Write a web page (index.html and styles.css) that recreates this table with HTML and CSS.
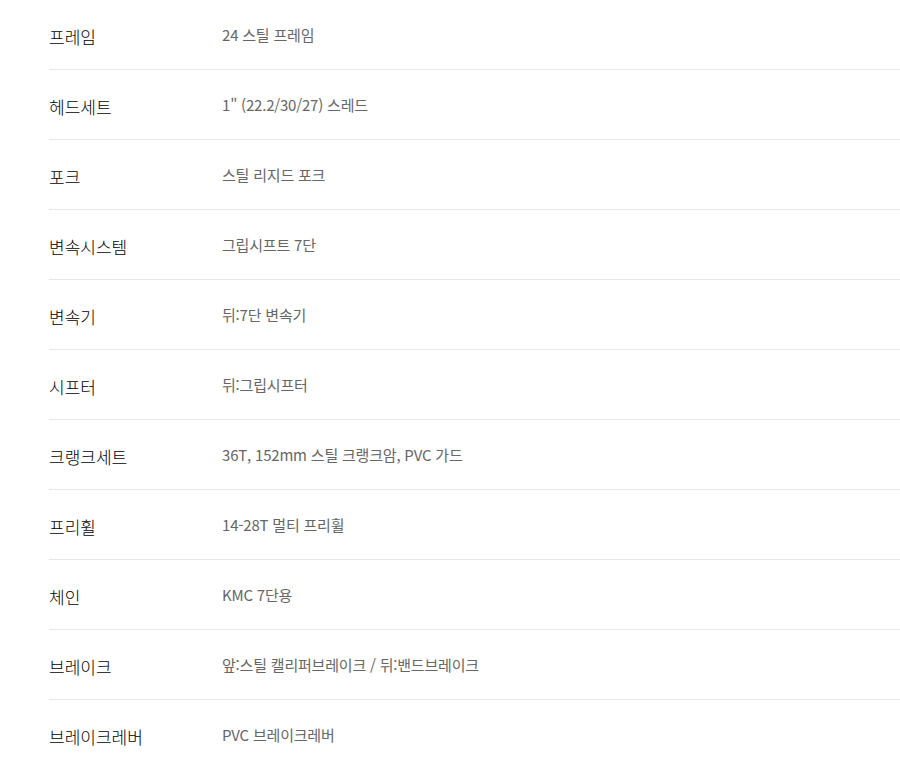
FILE: index.html
```html
<!DOCTYPE html>
<html lang="ko">
<head>
<meta charset="utf-8">
<link rel="stylesheet" href="styles.css">
</head>
<body>
<div class="spec">
  <div class="row"><div class="label">프레임</div><div class="value">24 스틸 프레임</div></div>
  <div class="row"><div class="label">헤드세트</div><div class="value">1" (22.2/30/27) 스레드</div></div>
  <div class="row"><div class="label">포크</div><div class="value">스틸 리지드 포크</div></div>
  <div class="row"><div class="label">변속시스템</div><div class="value">그립시프트 7단</div></div>
  <div class="row"><div class="label">변속기</div><div class="value">뒤:7단 변속기</div></div>
  <div class="row"><div class="label">시프터</div><div class="value">뒤:그립시프터</div></div>
  <div class="row"><div class="label">크랭크세트</div><div class="value">36T, 152mm 스틸 크랭크암, PVC 가드</div></div>
  <div class="row"><div class="label">프리휠</div><div class="value">14-28T 멀티 프리휠</div></div>
  <div class="row"><div class="label">체인</div><div class="value">KMC 7단용</div></div>
  <div class="row"><div class="label">브레이크</div><div class="value">앞:스틸 캘리퍼브레이크 / 뒤:밴드브레이크</div></div>
  <div class="row"><div class="label">브레이크레버</div><div class="value">PVC 브레이크레버</div></div>
</div>
</body>
</html>
```

FILE: styles.css
```css
html, body {
  margin: 0;
  padding: 0;
  background: #fff;
}
body {
  font-family: "Noto Sans CJK KR", "Noto Sans", sans-serif;
}
.spec {
  margin-left: 49px;
}
.row {
  display: flex;
  align-items: flex-start;
  height: 69px;
  border-bottom: 1px solid #e6e6e6;
  box-sizing: content-box;
}
.label {
  width: 173px;
  flex: none;
  font-size: 17px;
  font-weight: 300;
  line-height: 24px;
  padding-top: 25px;
  color: #000;
}
.value {
  font-size: 15px;
  font-weight: 400;
  line-height: 20px;
  padding-top: 25px;
  color: #666;
  letter-spacing: -0.2px;
}
```
